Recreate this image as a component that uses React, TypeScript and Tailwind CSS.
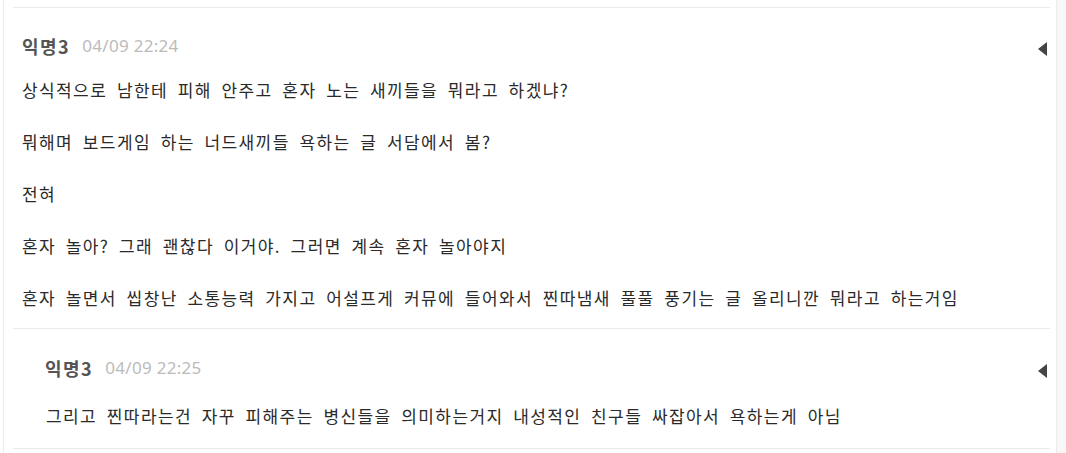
const comment = {
  author: "익명3",
  date: "04/09 22:24",
  lines: [
    "상식적으로 남한테 피해 안주고 혼자 노는 새끼들을 뭐라고 하겠냐?",
    "뭐해며 보드게임 하는 너드새끼들 욕하는 글 서담에서 봄?",
    "전혀",
    "혼자 놀아? 그래 괜찮다 이거야. 그러면 계속 혼자 놀아야지",
    "혼자 놀면서 씹창난 소통능력 가지고 어설프게 커뮤에 들어와서 찐따냄새 풀풀 풍기는 글 올리니깐 뭐라고 하는거임",
  ],
};

const reply = {
  author: "익명3",
  date: "04/09 22:25",
  lines: ["그리고 찐따라는건 자꾸 피해주는 병신들을 의미하는거지 내성적인 친구들 싸잡아서 욕하는게 아님"],
};

function Caret() {
  return (
    <svg width="9" height="14" viewBox="0 0 9 14" className="shrink-0">
      <polygon points="9,0 9,14 0,7" fill="#444" />
    </svg>
  );
}

function Header({ author, date }: { author: string; date: string }) {
  return (
    <div className="flex items-center h-6">
      <span className="font-bold text-[18px] leading-6 tracking-[1.5px] text-[#555]" style={{ fontFamily: '"Noto Sans CJK KR", sans-serif' }}>
        {author}
      </span>
      <span className="ml-[12px] text-[17px] leading-6 tracking-[0.3px] text-[#bbb]" style={{ fontFamily: '"Noto Sans", "Noto Sans CJK KR", sans-serif' }}>
        {date}
      </span>
      <div className="flex-1" />
      <div className="mt-[6px]">
        <Caret />
      </div>
    </div>
  );
}

function Body({ lines }: { lines: string[] }) {
  return (
    <div className="flex flex-col gap-[26px]">
      {lines.map((l, i) => (
        <p key={i} className="text-[17px] leading-[26px] text-[#2a2a2a] tracking-[1.4px] [word-spacing:4.5px] whitespace-nowrap">
          {l}
        </p>
      ))}
    </div>
  );
}

export default function App() {
  return (
    <div className="flex h-[453px] w-full overflow-hidden bg-white" style={{ fontFamily: '"Noto Sans CJK KR", sans-serif' }}>
      <div className="w-[3px] shrink-0" />
      <div className="flex-1 border-l border-r border-[#ececec] pl-[9px] pr-[6px]">
        <div className="h-[8px] border-b border-[#ebebeb]" />
        <div className="border-b border-[#ebebeb] pt-[26px] pb-[17px] pl-[9px] pr-[3px]">
          <Header author={comment.author} date={comment.date} />
          <div className="mt-[19px]">
            <Body lines={comment.lines} />
          </div>
        </div>
        <div className="border-b border-[#ebebeb] pt-[27px] pb-[19px] pl-[32px] pr-[3px]">
          <Header author={reply.author} date={reply.date} />
          <div className="mt-[23px] pl-[1px]">
            <Body lines={reply.lines} />
          </div>
        </div>
      </div>
      <div className="w-[9px] shrink-0 bg-[#f7f7f7]" />
    </div>
  );
}
